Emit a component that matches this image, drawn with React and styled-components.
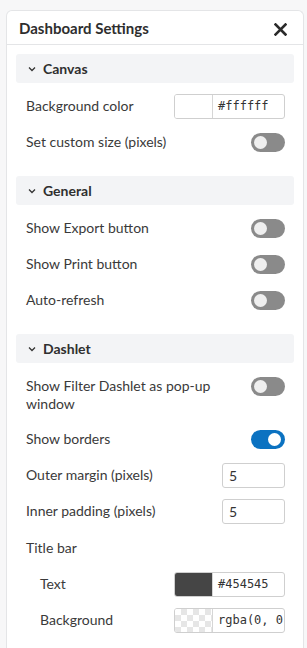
import React, { useState } from "react";
import styled, { createGlobalStyle } from "styled-components";

const GlobalStyle = createGlobalStyle`
  html, body {
    margin: 0;
    padding: 0;
    background: #f7f7f8;
    font-family: "Lato", "Liberation Sans", sans-serif;
    color: #333;
  }
  * { box-sizing: border-box; }
`;

const Chevron = () => (
  <svg width="8" height="6" viewBox="0 0 8 6">
    <polyline points="1,1.5 4,4.5 7,1.5" fill="none" stroke="#333" strokeWidth="1.3" />
  </svg>
);

const CloseIcon = () => (
  <svg width="13" height="13" viewBox="0 0 13 13">
    <path d="M1.5 1.5 L11.5 11.5 M11.5 1.5 L1.5 11.5" stroke="#2b2b2b" strokeWidth="2.6" strokeLinecap="square" />
  </svg>
);

const Toggle = ({ defaultOn }) => {
  const [on, setOn] = useState(!!defaultOn);
  return (
    <Track $on={on} onClick={() => setOn(!on)}>
      <Knob $on={on} />
    </Track>
  );
};

const ColorField = ({ swatch, value }) => (
  <ColorBox>
    <Swatch $color={swatch} />
    <ColorValue>{value}</ColorValue>
  </ColorBox>
);

const Section = ({ title, children }) => (
  <SectionWrap>
    <SectionHeader>
      <Chevron />
      <span>{title}</span>
    </SectionHeader>
    {children}
  </SectionWrap>
);

const App = () => {
  return (
    <>
      <GlobalStyle />
      <Panel>
        <Header>
          <Title>Dashboard Settings</Title>
          <CloseButton>
            <CloseIcon />
          </CloseButton>
        </Header>
        <Body>
          <Section title="Canvas">
            <Row>
              <Label>Background color</Label>
              <ColorField swatch="#ffffff" value="#ffffff" />
            </Row>
            <Row>
              <Label>Set custom size (pixels)</Label>
              <Toggle />
            </Row>
          </Section>

          <Section title="General">
            <Row>
              <Label>Show Export button</Label>
              <Toggle />
            </Row>
            <Row>
              <Label>Show Print button</Label>
              <Toggle />
            </Row>
            <Row>
              <Label>Auto-refresh</Label>
              <Toggle />
            </Row>
          </Section>

          <Section title="Dashlet">
            <Row $top>
              <Label>Show Filter Dashlet as pop-up window</Label>
              <Toggle />
            </Row>
            <Row>
              <Label>Show borders</Label>
              <Toggle defaultOn />
            </Row>
            <Row>
              <Label>Outer margin (pixels)</Label>
              <NumberInput defaultValue="5" />
            </Row>
            <Row>
              <Label>Inner padding (pixels)</Label>
              <NumberInput defaultValue="5" />
            </Row>
            <GroupLabel>Title bar</GroupLabel>
            <Row $indent>
              <Label>Text</Label>
              <ColorField swatch="#454545" value="#454545" />
            </Row>
            <Row $indent>
              <Label>Background</Label>
              <ColorField swatch="checker" value="rgba(0, 0, 0, 0)" />
            </Row>
          </Section>
        </Body>
      </Panel>
    </>
  );
};

export default App;

// Styled Components
const Panel = styled.div`
  margin: 10px 3px 0 6px;
  background: #fff;
  border: 1px solid #e4e5e7;
  border-bottom: none;
  border-radius: 6px 6px 0 0;
  min-height: 660px;
`;

const Header = styled.div`
  display: flex;
  align-items: center;
  justify-content: space-between;
  height: 34px;
  padding: 0 16px 0 12px;
  border-bottom: 1px solid #e4e5e7;
`;

const Title = styled.h2`
  margin: 0;
  font-size: 15px;
  font-weight: 700;
  color: #2e2e2e;
`;

const CloseButton = styled.button`
  display: flex;
  align-items: center;
  justify-content: center;
  padding: 0;
  margin-top: 3px;
  border: none;
  background: none;
  cursor: pointer;
`;

const Body = styled.div`
  padding: 9px 9px 0 9px;
`;

const SectionWrap = styled.div`
  margin-bottom: 16px;
`;

const SectionHeader = styled.div`
  display: flex;
  align-items: center;
  gap: 7px;
  height: 29px;
  padding-left: 12px;
  margin-bottom: 5px;
  background: #f3f4f6;
  border-radius: 3px;
  font-size: 14px;
  font-weight: 700;
  color: #2f2f2f;
`;

const Row = styled.div`
  display: flex;
  justify-content: space-between;
  align-items: ${(p) => (p.$top ? "flex-start" : "center")};
  min-height: 36px;
  padding: ${(p) => (p.$top ? "9px 9px 8px 10px" : "0 9px 0 10px")};
  padding-left: ${(p) => (p.$indent ? "24px" : "10px")};
  gap: 12px;
`;

const Label = styled.span`
  font-size: 14px;
  line-height: 18px;
  color: #3a3a3a;
  max-width: 200px;
`;

const GroupLabel = styled.div`
  padding: 10px 10px 9px;
  font-size: 14px;
  line-height: 18px;
  color: #3a3a3a;
`;

const Track = styled.div`
  position: relative;
  flex-shrink: 0;
  width: 34px;
  height: 19px;
  border-radius: 10px;
  background: ${(p) => (p.$on ? "#0b72c1" : "#8a8a8a")};
  cursor: pointer;
`;

const Knob = styled.div`
  position: absolute;
  top: 3px;
  left: ${(p) => (p.$on ? "17px" : "3px")};
  width: 13px;
  height: 13px;
  border-radius: 50%;
  background: ${(p) => (p.$on ? "#fff" : "#efefef")};
`;

const ColorBox = styled.div`
  display: flex;
  width: 111px;
  height: 25px;
  border: 1px solid #cfcfcf;
  border-radius: 3px;
  overflow: hidden;
  flex-shrink: 0;
`;

const Swatch = styled.div`
  width: 38px;
  flex-shrink: 0;
  border-right: 1px solid #d6d6d6;
  background: ${(p) =>
    p.$color === "checker"
      ? "repeating-conic-gradient(#e6e6e6 0% 25%, #ffffff 0% 50%) 0 0 / 12px 12px"
      : p.$color};
`;

const ColorValue = styled.div`
  display: flex;
  align-items: center;
  padding-left: 5px;
  font-family: "DejaVu Sans Mono", "Liberation Mono", monospace;
  font-size: 12px;
  color: #333;
  white-space: nowrap;
  overflow: hidden;
`;

const NumberInput = styled.input`
  width: 63px;
  height: 25px;
  padding: 0 6px;
  border: 1px solid #cfcfcf;
  border-radius: 3px;
  font-family: "Lato", "Liberation Sans", sans-serif;
  font-size: 14px;
  color: #333;
  outline: none;
`;
